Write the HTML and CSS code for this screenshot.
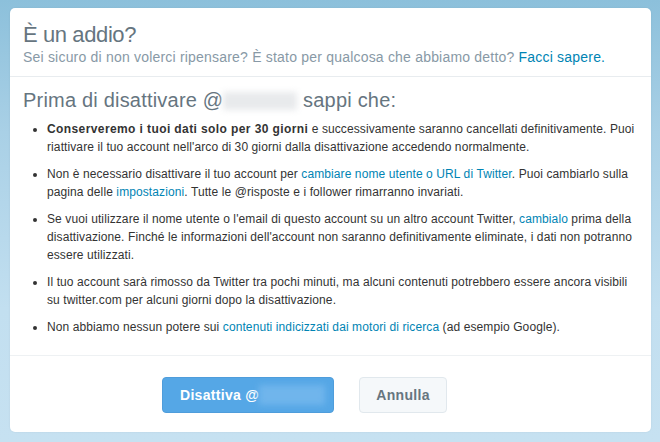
FILE: index.html
```html
<!DOCTYPE html>
<html lang="it">
<head>
<meta charset="utf-8">
<link rel="stylesheet" href="styles.css">
</head>
<body>
<div class="dialog">
  <div class="head">
    <h1 class="title">È un addio?</h1>
    <p class="sub">Sei sicuro di non volerci ripensare? È stato per qualcosa che abbiamo detto? <a href="#">Facci sapere.</a></p>
  </div>
  <div class="body">
    <h2 class="heading">Prima di disattivare @<span class="blur"></span> sappi che:</h2>
    <ul class="list">
      <li><b>Conserveremo i tuoi dati solo per 30 giorni</b> e successivamente saranno cancellati definitivamente. Puoi riattivare il tuo account nell'arco di 30 giorni dalla disattivazione accedendo normalmente.</li>
      <li>Non è necessario disattivare il tuo account per <a href="#">cambiare nome utente o URL di Twitter</a>. Puoi cambiarlo sulla pagina delle <a href="#">impostazioni</a>. Tutte le @risposte e i follower rimarranno invariati.</li>
      <li>Se vuoi utilizzare il nome utente o l'email di questo account su un altro account Twitter, <a href="#">cambialo</a> prima della disattivazione. Finché le informazioni dell'account non saranno definitivamente eliminate, i dati non potranno essere utilizzati.</li>
      <li>Il tuo account sarà rimosso da Twitter tra pochi minuti, ma alcuni contenuti potrebbero essere ancora visibili su twitter.com per alcuni giorni dopo la disattivazione.</li>
      <li>Non abbiamo nessun potere sui <a href="#">contenuti indicizzati dai motori di ricerca</a> (ad esempio Google).</li>
    </ul>
  </div>
  <div class="foot">
    <button class="btn primary">Disattiva @<span class="blur light"></span></button>
    <button class="btn">Annulla</button>
  </div>
</div>
</body>
</html>
```
FILE: styles.css
```css
html, body { margin: 0; padding: 0; }
body {
  width: 660px;
  height: 442px;
  overflow: hidden;
  background: linear-gradient(#8cc0db 0%, #a9d0e6 30%, #c2dff0 70%, #c6e1f1 100%);
  font-family: "Liberation Sans", Arial, sans-serif;
}
.dialog {
  margin: 8px 9px 0 10px;
  width: 641px;
  height: 424px;
  background: #fff;
  border-radius: 5px;
  box-shadow: 0 0 2px rgba(0,0,0,0.08);
  display: flex;
  flex-direction: column;
}
.head {
  padding: 14px 13px 0 13px;
  height: 54px;
  border-bottom: 1px solid #e8ecef;
}
.title {
  margin: 0;
  font-weight: normal;
  font-size: 22px;
  line-height: 26px;
  letter-spacing: -0.4px;
  color: #66757f;
}
.sub {
  margin: 1px 0 0;
  font-size: 14px;
  line-height: 16px;
  letter-spacing: 0.2px;
  color: #8899a6;
  white-space: nowrap;
}
a { color: #0084b4; text-decoration: none; }
.body {
  padding: 11px 13px 0 13px;
  height: 267px;
  border-bottom: 1px solid #eef1f3;
}
.heading {
  margin: 0;
  font-weight: normal;
  font-size: 20px;
  line-height: 24px;
  letter-spacing: 0.2px;
  color: #66757f;
}
.blur {
  display: inline-block;
  width: 74px;
  height: 18px;
  vertical-align: -3px;
  background: #e8eaec;
  filter: blur(3px);
}
.blur.light {
  width: 66px;
  height: 20px;
  vertical-align: -5px;
  background: #70b5ec;
}
.list {
  margin: 8px 0 0;
  padding: 0 0 0 24px;
  font-size: 12px;
  line-height: 18px;
  letter-spacing: 0.1px;
  color: #333;
}
.list li { margin-bottom: 9px; }
.list b { letter-spacing: 0.4px; }
.foot {
  flex: 1;
  display: flex;
  align-items: flex-start;
  gap: 25px;
  padding: 21px 0 0 152px;
}
.btn {
  box-sizing: border-box;
  white-space: nowrap;
  font-family: "Liberation Sans", Arial, sans-serif;
  font-size: 14px;
  font-weight: bold;
  letter-spacing: 0.3px;
  height: 36px;
  padding: 0;
  border-radius: 4px;
  border: 1px solid #e1e8ed;
  background: #f5f8fa;
  color: #66757f;
  width: 88px;
  text-align: center;
}
.btn.primary {
  width: 172px;
  background: #55a7e6;
  border-color: #4f9ddb;
  color: #fff;
  text-align: left;
  padding-left: 17px;
}
```
